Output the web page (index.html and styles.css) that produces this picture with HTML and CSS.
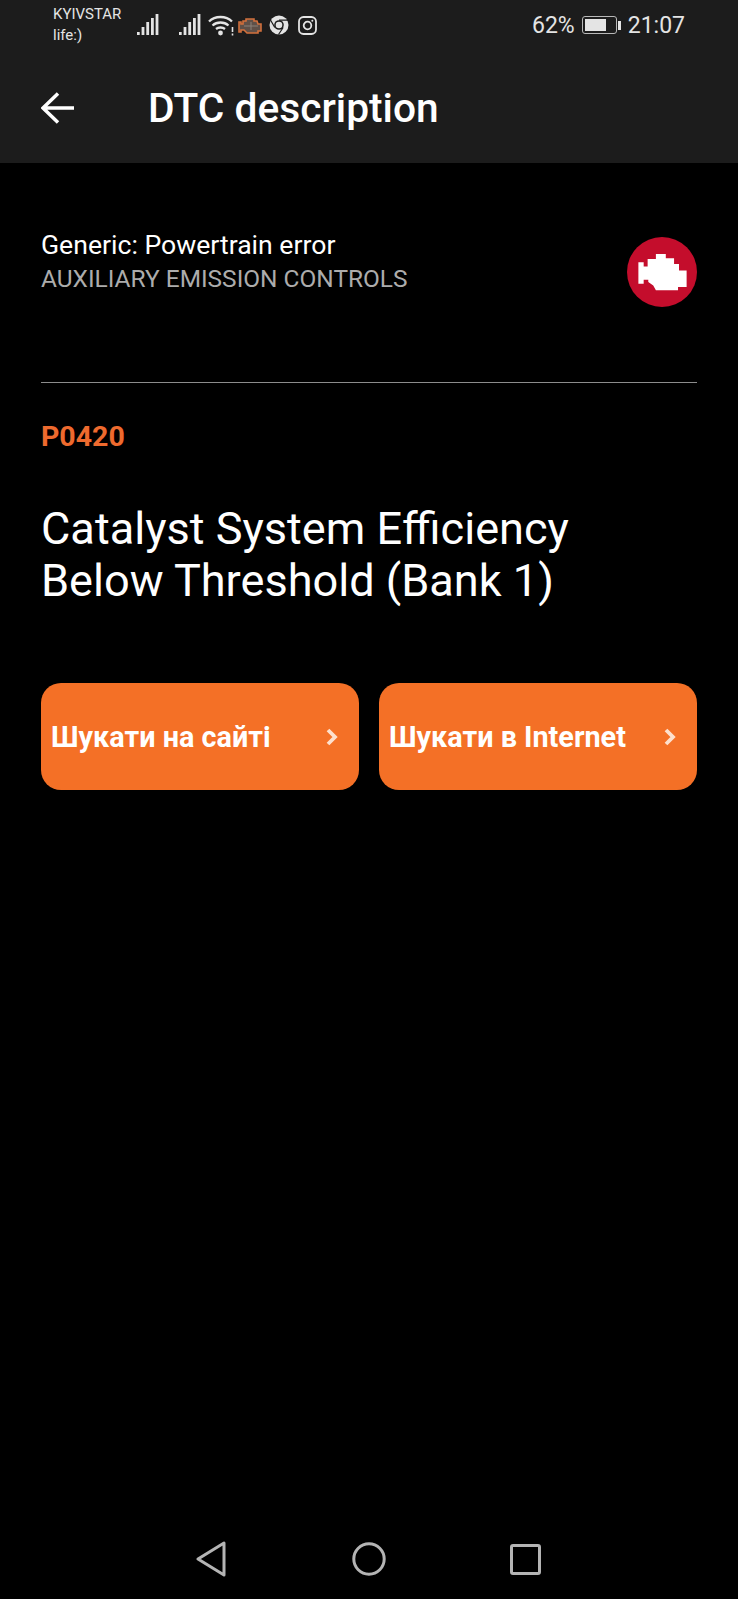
FILE: index.html
```html
<!DOCTYPE html>
<html>

<head>
  <meta name="viewport" content="width=device-width,initial-scale=1.0">
  <title>DTC description</title>
  <link rel="stylesheet" href="styles.css">
</head>

<body>
  <div class="screen">
    <header class="topbar">
      <div class="status">
        <div class="carrier">
          <span>KYIVSTAR</span>
          <span>life:)</span>
        </div>
        <div class="status-icons">
          <svg class="signal" width="22" height="22" viewBox="0 0 22 22">
            <path d="M1.300 21v-3M6 21v-8M10.700 21v-13M15.400 21v-17M20 21v-21" stroke="#e4e4e4" stroke-width="2.800" fill="none" />
          </svg>
          <svg class="signal sim2" width="22" height="22" viewBox="0 0 22 22">
            <path d="M1.300 21v-3M6 21v-8M10.700 21v-13M15.400 21v-17M20 21v-21" stroke="#e4e4e4" stroke-width="2.800" fill="none" />
          </svg>
          <svg class="wifi" width="27" height="22" viewBox="0 0 27 22">
            <path d="M1 7.500C7 1.500 18 1.500 24 7.500M4.500 11.500C9 7.500 16 7.500 20.500 11.500M8 15C10.500 13 14.500 13 17 15" stroke="#e4e4e4" stroke-width="2.300" fill="none" />
            <circle cx="12.500" cy="19" r="2.400" fill="#e4e4e4" />
            <path d="M24.500 13v5M24.500 19.500v2" stroke="#e4e4e4" stroke-width="1.600" />
          </svg>
          <svg class="engine" width="25" height="17" viewBox="0 0 25 17">
            <path d="M1 5h2v2h2V4h3V2h8v2h3l1 3h3v7h-3v2H9l-3-3H3v2H1z" fill="#5f5048" stroke="#d2703c" stroke-width="1.600" />
            <path d="M6 9h14M13 5v8" stroke="#8a8078" stroke-width="1" />
          </svg>
          <svg class="chrome" width="20" height="20" viewBox="0 0 20 20">
            <circle cx="10" cy="10" r="9.500" fill="#e4e4e4" />
            <circle cx="10" cy="10" r="4.800" fill="#1c1c1c" />
            <circle cx="10" cy="10" r="3.300" fill="#e4e4e4" />
            <path d="M10 5.200H19M5.800 12.500L1.500 5M14.200 12.500L9.500 19.500" stroke="#1c1c1c" stroke-width="1.200" />
          </svg>
          <svg class="insta" width="19" height="19" viewBox="0 0 19 19">
            <rect x="1" y="1" width="17" height="17" rx="4.500" stroke="#e4e4e4" stroke-width="1.800" fill="none" />
            <circle cx="9.500" cy="9.500" r="3.800" stroke="#e4e4e4" stroke-width="1.800" fill="none" />
            <circle cx="14.300" cy="4.700" r="1" fill="#e4e4e4" />
          </svg>
        </div>
        <div class="status-right">
          <span>62%</span>
          <div class="battery">
            <div class="battery-body">
              <div class="battery-fill"></div>
            </div>
            <div class="battery-tip"></div>
          </div>
          <span>21:07</span>
        </div>
      </div>
      <div class="appbar">
        <svg class="back" width="34" height="32" viewBox="0 0 34 32">
          <path d="M33 16H2M17 1.500L2 16l15 14.500" stroke="#fff" stroke-width="3.500" fill="none" />
        </svg>
        <h1>DTC description</h1>
      </div>
    </header>

    <main class="content">
      <section class="summary">
        <div>
          <p class="kind">Generic: Powertrain error</p>
          <p class="group">AUXILIARY EMISSION CONTROLS</p>
        </div>
        <div class="lamp">
          <svg width="49" height="37" viewBox="0 0 146 112">
            <path d="M53 0h30v13h25v17h15v20h23v50h-26v10H53l-8-15-15-10v-7H16v12H0V25h16v13h12V15h25z" fill="#fff" />
          </svg>
        </div>
      </section>
      <hr class="divider">
      <p class="code">P0420</p>
      <h2 class="title">Catalyst System Efficiency Below Threshold (Bank 1)</h2>
      <div class="actions">
        <button class="search">
          <span>Шукати на сайті</span>
          <svg width="12" height="18" viewBox="0 0 12 18">
            <path d="M2 2l7 7-7 7" stroke="#fde0cd" stroke-width="3.800" fill="none" />
          </svg>
        </button>
        <button class="search">
          <span>Шукати в Internet</span>
          <svg width="12" height="18" viewBox="0 0 12 18">
            <path d="M2 2l7 7-7 7" stroke="#fde0cd" stroke-width="3.800" fill="none" />
          </svg>
        </button>
      </div>
    </main>

    <nav class="navbar">
      <svg width="30" height="36" viewBox="0 0 30 36">
        <path d="M28 2v32L2 18z" stroke="#b4b4b4" stroke-width="3" stroke-linejoin="round" fill="none" />
      </svg>
      <svg class="home" width="34" height="34" viewBox="0 0 34 34">
        <circle cx="17" cy="17" r="15.200" stroke="#b4b4b4" stroke-width="3" fill="none" />
      </svg>
      <svg width="31" height="31" viewBox="0 0 31 31">
        <rect x="1.500" y="1.500" width="28" height="28" rx="1.500" stroke="#b4b4b4" stroke-width="3" fill="none" />
      </svg>
    </nav>
  </div>
</body>

</html>
```

FILE: styles.css
```css
* {
  box-sizing: border-box;
}

body {
  margin: 0;
  background: #000;
  font-family: Roboto, "Liberation Sans", sans-serif;
}

.screen {
  display: flex;
  flex-direction: column;
  height: 1599px;
  overflow: hidden;
}

.topbar {
  background: #1c1c1c;
  height: 163px;
}

.status {
  display: flex;
  align-items: center;
  height: 50px;
  padding: 0 53px;
  color: #e4e4e4;
}

.carrier {
  display: flex;
  flex-direction: column;
  width: 84px;
  font-size: 15px;
  line-height: 21px;
}

.status-icons {
  display: flex;
  align-items: center;
}

.sim2 {
  margin-left: 20px;
}

.wifi {
  margin-left: 7px;
}

.engine {
  margin-left: 3px;
}

.chrome {
  margin-left: 6px;
}

.insta {
  margin-left: 9px;
}

.status-right {
  display: flex;
  align-items: center;
  gap: 7px;
  margin-left: auto;
  font-size: 23px;
}

.battery {
  display: flex;
  align-items: center;
  gap: 1px;
}

.battery-body {
  width: 35px;
  height: 18px;
  padding: 2px;
  border: 1.500px solid #b8b8b8;
  border-radius: 3px;
}

.battery-fill {
  width: 21px;
  height: 100%;
  background: #e4e4e4;
}

.battery-tip {
  width: 3px;
  height: 9px;
  background: #e4e4e4;
}

.appbar {
  display: flex;
  align-items: center;
  height: 113px;
  padding-left: 41px;
  padding-top: 3px;
}

.back {
  margin-right: 73px;
}

.appbar h1 {
  margin: 0;
  color: #fff;
  font-size: 40.700px;
  font-weight: 500;
}

.content {
  flex-grow: 1;
  padding: 0 41px;
}

.summary {
  display: flex;
  align-items: flex-start;
  justify-content: space-between;
  height: 219px;
  padding-top: 67px;
}

.kind {
  margin: 0 0 5px 0;
  color: #fff;
  font-size: 26.600px;
  line-height: 30px;
}

.group {
  margin: 0;
  color: #acacac;
  font-size: 24.450px;
  line-height: 28px;
}

.lamp {
  display: flex;
  align-items: center;
  justify-content: center;
  width: 70px;
  height: 70px;
  margin-top: 7px;
  border-radius: 50%;
  background: #c40d2c;
}

.lamp svg {
  margin-left: 1px;
  filter: blur(0.6px);
}

.divider {
  height: 1px;
  margin: 0;
  border: none;
  background: #8c8c8c;
}

.code {
  margin: 38px 0 0 0;
  color: #ee6a2e;
  font-size: 28.500px;
  font-weight: 700;
  line-height: 32px;
}

.title {
  margin: 50px 0 0 0;
  color: #fff;
  font-size: 45.100px;
  font-weight: 400;
  line-height: 52px;
}

.actions {
  display: flex;
  gap: 20px;
  margin-top: 76px;
}

.search {
  display: flex;
  flex: 1;
  align-items: center;
  justify-content: space-between;
  height: 107px;
  padding: 0 21px 0 10px;
  border: none;
  border-radius: 20px;
  background: #f47026;
  color: #fff;
  font-family: inherit;
  font-size: 28.800px;
  font-weight: 700;
}

.navbar {
  display: flex;
  align-items: center;
  justify-content: space-between;
  height: 80px;
  padding: 0 197px 0 196px;
}

.home {
  margin-left: 2px;
}
```
